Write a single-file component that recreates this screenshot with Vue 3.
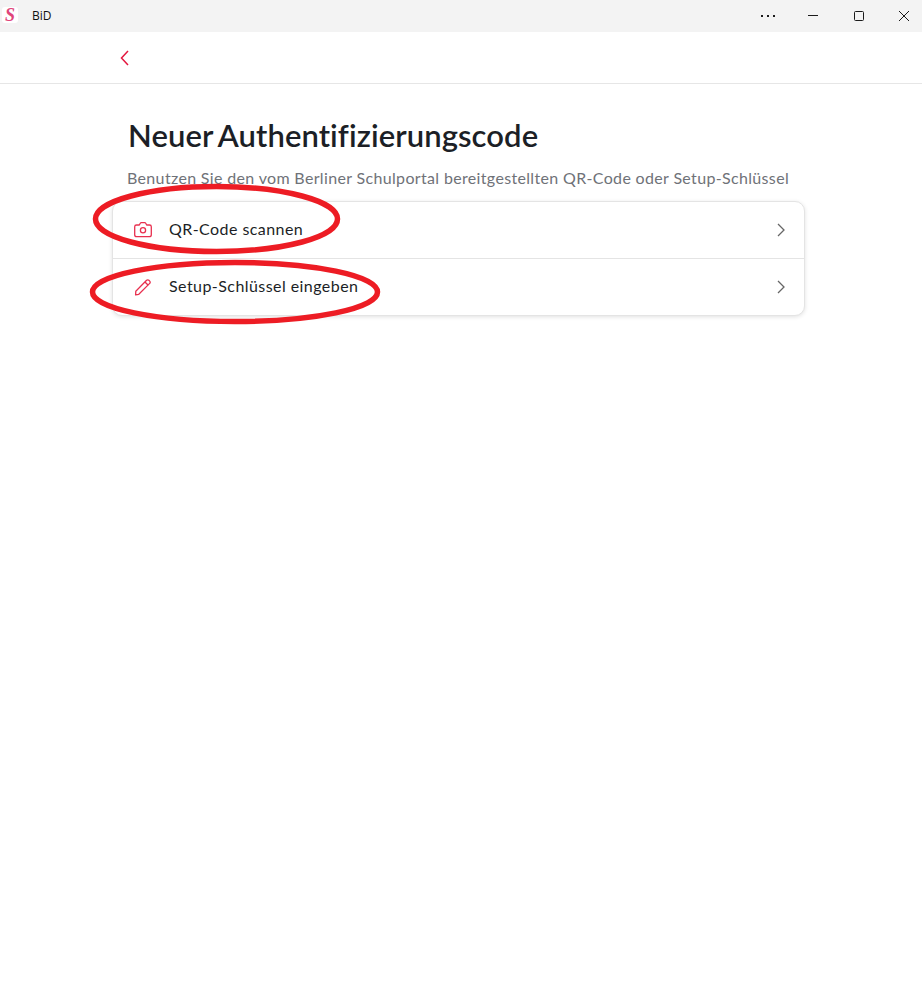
<script setup>
const rows = [
  { label: 'QR-Code scannen', icon: 'camera' },
  { label: 'Setup-Schlüssel eingeben', icon: 'pencil' },
]
</script>

<template>
  <div class="window">
    <div class="titlebar">
      <div class="app">
        <span class="logo">S</span>
        <span class="app-name">BiD</span>
      </div>
      <div class="controls">
        <span class="ctl">
          <svg width="16" height="16" viewBox="0 0 16 16"><g fill="#1a1a1a"><rect x="1" y="7" width="2" height="2"/><rect x="7" y="7" width="2" height="2"/><rect x="13" y="7" width="2" height="2"/></g></svg>
        </span>
        <span class="ctl">
          <svg width="16" height="16" viewBox="0 0 16 16"><path d="M3 7.5h10" stroke="#1a1a1a" fill="none"/></svg>
        </span>
        <span class="ctl">
          <svg width="16" height="16" viewBox="0 0 16 16"><rect x="3.5" y="3.5" width="9" height="9" rx="1" stroke="#1a1a1a" fill="none"/></svg>
        </span>
        <span class="ctl">
          <svg width="16" height="16" viewBox="0 0 16 16"><path d="M3 3l10 10M13 3L3 13" stroke="#1a1a1a" fill="none"/></svg>
        </span>
      </div>
    </div>

    <div class="nav">
      <svg class="back" width="12" height="16" viewBox="0 0 12 16"><path d="M9 1L2.5 8 9 15" stroke="#e4173f" stroke-width="1.5" fill="none"/></svg>
    </div>

    <main class="content">
      <h1 class="title">Neuer Authentifizierungscode</h1>
      <p class="subtitle">Benutzen Sie den vom Berliner Schulportal bereitgestellten QR-Code oder Setup-Schlüssel</p>
      <div class="card">
        <div v-for="row in rows" :key="row.label" class="row">
          <svg v-if="row.icon === 'camera'" class="icon" width="20" height="20" viewBox="0 0 20 20" fill="none" stroke="#e8304f" stroke-width="1.3" stroke-linejoin="round">
            <path d="M3.500 5h2.800l1-1.800a1.200 1.200 0 0 1 1-.6h3.400a1.200 1.200 0 0 1 1 .6l1 1.800h2.800A1.800 1.800 0 0 1 18.300 6.800v7.900a2 2 0 0 1-2 2H3.700a2 2 0 0 1-2-2V6.800A1.800 1.800 0 0 1 3.500 5z"/>
            <circle cx="10" cy="10.200" r="2.600"/>
          </svg>
          <svg v-else class="icon" width="20" height="20" viewBox="0 0 20 20" fill="none" stroke="#e8304f" stroke-width="1.3" stroke-linejoin="round">
            <path d="M2.800 14.300L13.600 3.300a1.600 1.600 0 0 1 2.300 0l.8.800a1.600 1.600 0 0 1 0 2.300L5.800 17.300l-3.200.6z"/>
            <path d="M12 5l3.200 3.200"/>
          </svg>
          <span class="label">{{ row.label }}</span>
          <svg class="chev" width="10" height="14" viewBox="0 0 10 14"><path d="M2 1l6 6-6 6" stroke="#666" stroke-width="1.300" fill="none"/></svg>
        </div>
      </div>
    </main>

    <svg class="marks" width="922" height="996" viewBox="0 0 922 996" fill="none" stroke="#ed1c24" stroke-width="5.500">
      <ellipse cx="216.500" cy="219" rx="121" ry="32.500" />
      <ellipse cx="235" cy="292" rx="142.500" ry="29.500" />
    </svg>
  </div>
</template>

<style scoped>
.window {
  position: relative;
  width: 922px;
  height: 996px;
  background: #fff;
  overflow: hidden;
  font-family: "Lato", "Open Sans", sans-serif;
  color: #1c1f26;
}
.titlebar {
  height: 32px;
  background: #f3f3f3;
  display: flex;
  align-items: center;
  justify-content: space-between;
}
.app {
  display: flex;
  align-items: center;
  padding-left: 2px;
  padding-bottom: 2px;
}
.logo {
  width: 16px;
  height: 16px;
  background: #fff;
  border-radius: 3px;
  color: #e0457a;
  font: italic 700 18px/16px "Liberation Serif", serif;
  text-align: center;
}
.app-name {
  margin-left: 14px;
  font: 12px "Open Sans", sans-serif;
  color: #111;
}
.controls {
  display: flex;
  margin-right: -5px;
  padding-bottom: 1px;
}
.ctl {
  width: 45.500px;
  height: 30px;
  display: flex;
  align-items: center;
  justify-content: center;
}
.nav {
  height: 51px;
  border-bottom: 1px solid #e6e6e6;
  display: flex;
  align-items: center;
  padding-left: 119px;
}
.back {
  display: block;
  margin-top: 1px;
}
.content {
  padding: 31px 0 0 112px;
  width: 693px;
}
.title {
  margin: 0 0 0 16px;
  font-size: 31px;
  line-height: 40px;
  font-weight: 600;
  word-spacing: -2px;
  letter-spacing: 0.08px;
  white-space: nowrap;
}
.subtitle {
  margin: 12px 0 0 15px;
  font-size: 16px;
  line-height: 22px;
  letter-spacing: 0.34px;
  color: #6f7278;
  white-space: nowrap;
}
.card {
  margin-top: 12px;
  border: 1px solid #e4e4e4;
  border-radius: 10px;
  box-shadow: 0 1px 4px rgba(0, 0, 0, 0.12);
  background: #fff;
}
.row {
  height: 56px;
  display: flex;
  align-items: center;
  padding: 0 18px 0 20px;
}
.row + .row {
  border-top: 1px solid #e4e4e4;
}
.icon {
  flex: none;
}
.label {
  margin-left: 16px;
  padding-bottom: 3px;
  font-size: 16px;
  letter-spacing: 0.44px;
  flex: 1;
}
.marks {
  position: absolute;
  left: 0;
  top: 0;
  pointer-events: none;
}
</style>
